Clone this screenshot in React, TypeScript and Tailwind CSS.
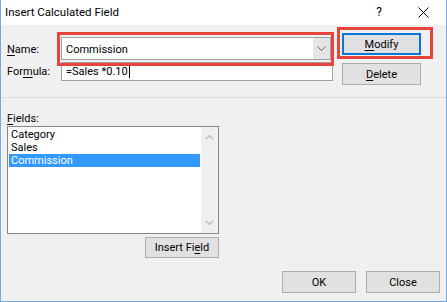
import React from "react";

const font = { fontFamily: 'Roboto, "Open Sans", sans-serif' };

function Btn({
  children,
  className = "",
}: {
  children: React.ReactNode;
  className?: string;
}) {
  return (
    <div
      className={
        "flex items-center justify-center bg-[#e1e1e1] border border-[#adadad] text-[11px] leading-[15px] text-black " +
        className
      }
    >
      {children}
    </div>
  );
}

export default function App() {
  return (
    <div
      style={font}
      className="w-[447px] h-[302px] bg-[#f0f0f0] border-x border-b border-[#7aa6da] flex flex-col text-[11px] leading-[15px] text-black overflow-hidden"
    >
      {/* Title bar */}
      <div className="h-[25px] bg-white flex items-center pl-[4px] shrink-0">
        <span className="text-[11.5px] leading-[15px]">Insert Calculated Field</span>
        <span className="ml-auto text-[12px] leading-[15px] mr-[36px]">?</span>
        <svg width="11" height="11" viewBox="0 0 11 11" className="mr-[17px]">
          <path d="M0.5 0.5 L10.5 10.5 M10.5 0.5 L0.5 10.5" stroke="#000" strokeWidth="1" />
        </svg>
      </div>

      {/* Body */}
      <div className="relative flex-1 flex flex-col">
        {/* Top section */}
        <div className="h-[72px] flex pl-[6px] shrink-0">
          <div className="w-[326px] flex flex-col">
            <div className="mt-[12px] h-[23px] flex items-center">
              <div className="w-[54px] pt-px">
                <u className="underline-offset-[2px]">N</u>ame:
              </div>
              <div className="w-[270px] h-[23px] bg-white border border-[#a0a0a0] flex items-center">
                <span className="pl-[4px] pt-px flex-1">Commission</span>
                <div className="w-[17px] h-full bg-[#e5e5e5] flex items-center justify-center">
                  <svg width="9" height="5" viewBox="0 0 9 5">
                    <path d="M0.5 0.5 L4.5 4.5 L8.5 0.5" fill="none" stroke="#606060" strokeWidth="1" />
                  </svg>
                </div>
              </div>
            </div>
            <div className="mt-[2px] h-[19px] flex items-center">
              <div className="w-[54px]">
                For<u className="underline-offset-[2px]">m</u>ula:
              </div>
              <div className="w-[272px] h-[19px] bg-white border border-[#a0a0a0] flex items-center pl-[4px]">
                <span>=Sales *0.10</span>
                <span className="w-px h-[13px] bg-black ml-[1px]" />
              </div>
            </div>
          </div>
          <div className="ml-[9px] flex flex-col">
            <div className="mt-[8px] w-[79px] h-[22px] flex items-center justify-center bg-[#e1e1e1] border-2 border-[#0078d7]">
              <span>
                <u className="underline-offset-[2px]">M</u>odify
              </span>
            </div>
            <Btn className="mt-[8px] w-[79px] h-[22px]">
              <span>
                <u className="underline-offset-[2px]">D</u>elete
              </span>
            </Btn>
          </div>
        </div>

        {/* Separator */}
        <div className="h-px bg-[#dcdcdc] shrink-0" />

        {/* Fields */}
        <div className="pl-[6px] mt-[12px] flex flex-col">
          <div className="h-[15px] pt-px">
            <u className="underline-offset-[2px]">F</u>ields:
          </div>
          <div className="mt-[1px] w-[212px] h-[108px] bg-white border border-[#828790] flex">
            <div className="flex-1 p-[1px] flex flex-col">
              <div className="h-[13px] leading-[13px] flex items-center pl-[2px]">Category</div>
              <div className="h-[13px] leading-[13px] flex items-center pl-[2px]">Sales</div>
              <div className="h-[13px] leading-[13px] flex items-center pl-[2px] bg-[#3399ff] text-white">
                Commission
              </div>
            </div>
            <div className="w-[17px] bg-[#f0f0f0] flex flex-col items-center justify-between py-[8px]">
              <svg width="9" height="5" viewBox="0 0 9 5">
                <path d="M0.5 4.5 L4.5 0.5 L8.5 4.5" fill="none" stroke="#c0c0c0" strokeWidth="1.5" />
              </svg>
              <svg width="9" height="5" viewBox="0 0 9 5">
                <path d="M0.5 0.5 L4.5 4.5 L8.5 0.5" fill="none" stroke="#c0c0c0" strokeWidth="1.5" />
              </svg>
            </div>
          </div>
          <div className="w-[212px] flex justify-end mt-[3px]">
            <Btn className="w-[74px] h-[21px]">
              <span>
                Insert Fi<u className="underline-offset-[2px]">e</u>ld
              </span>
            </Btn>
          </div>
        </div>

        {/* Bottom buttons */}
        <div className="mt-auto mb-[8px] flex justify-end gap-[10px] pr-[6px]">
          <Btn className="w-[74px] h-[22px]">OK</Btn>
          <Btn className="w-[74px] h-[22px]">Close</Btn>
        </div>

        {/* Red annotation boxes */}
        <div className="absolute left-[56px] top-[7px] w-[277px] h-[34px] border-[3px] border-[#e8433f]" />
        <div className="absolute left-[336px] top-[2px] w-[96px] h-[32px] border-[3px] border-[#e8433f]" />
      </div>
    </div>
  );
}
